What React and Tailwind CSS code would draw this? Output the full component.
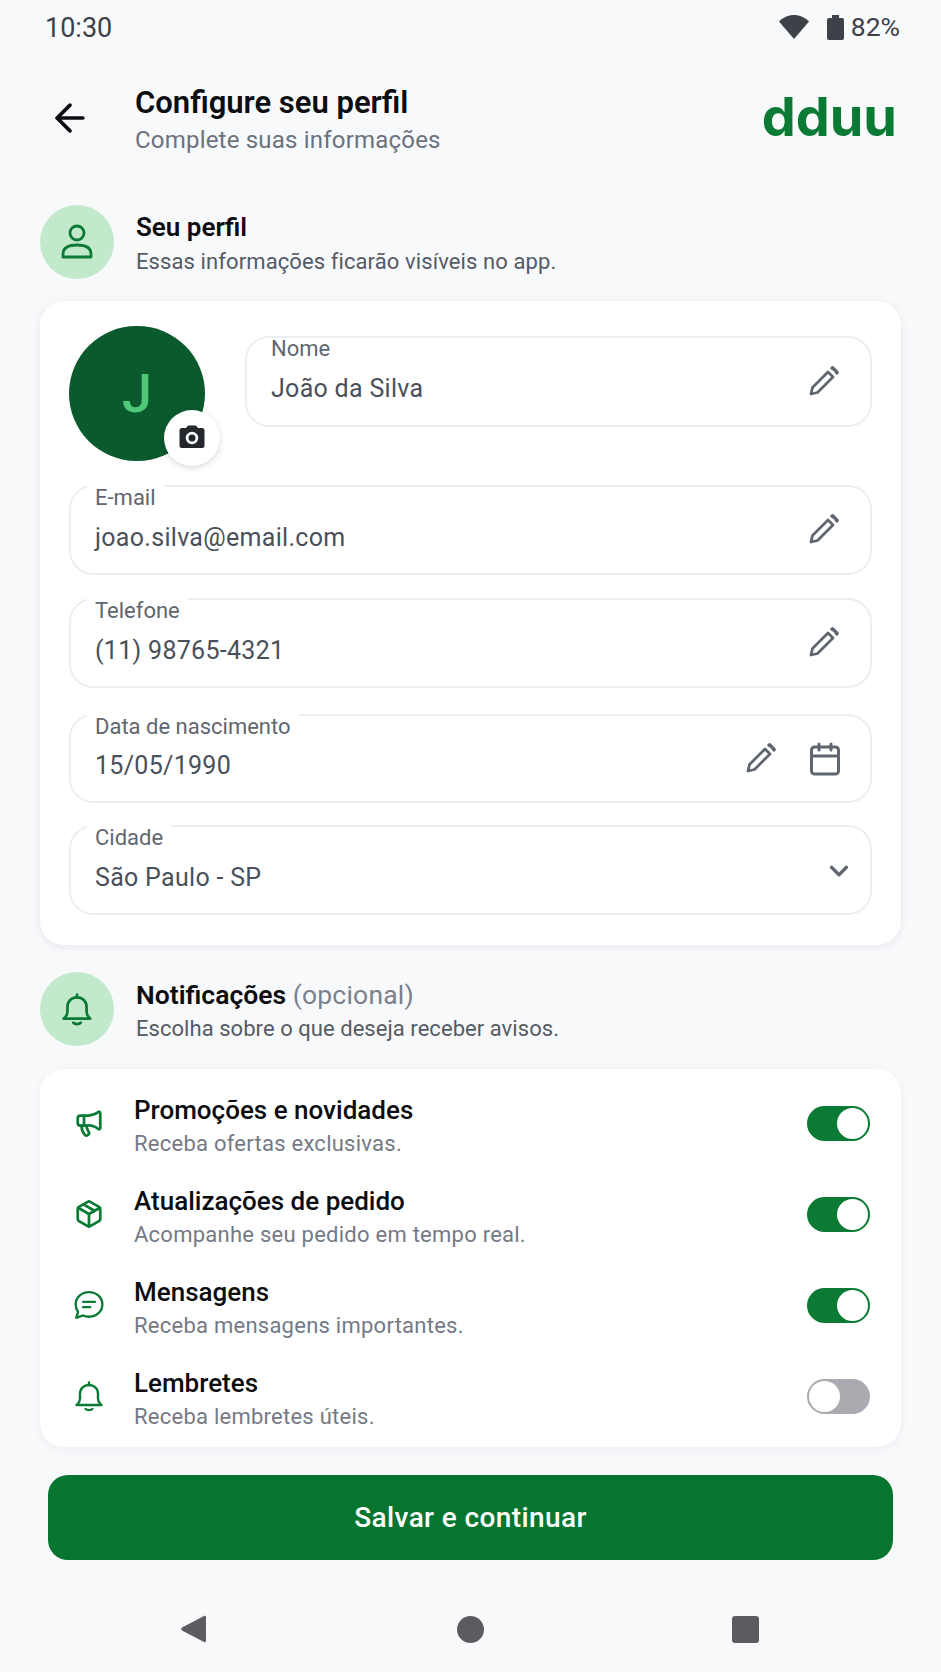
import { ArrowLeft, Calendar, ChevronDown, Megaphone, Package } from "lucide-react";

function PencilIcon({ className = "" }) {
  return (
    <svg className={className} width="32" height="32" viewBox="0 0 32 32" fill="none" stroke="#5f6670" strokeWidth="2.8" strokeLinejoin="round">
      <path d="M3 29 L4.5 22.5 L20 7 L25 12 L9.5 27.5 Z" />
      <path d="M23 4.2 L24.6 2.8 L29.2 7.4 L27.8 9" strokeWidth="3.4" />
    </svg>
  );
}

function BellIcon({ size, sw }) {
  return (
    <svg width={size} height={size} viewBox="0 0 32 32" fill="none" stroke="#0b7a35" strokeWidth={sw} strokeLinecap="round" strokeLinejoin="round">
      <path d="M16 2.5v2.5" />
      <path d="M3.5 25h25c-2-1.500-3.500-3.500-3.500-7v-4c0-5.500-4-9-9-9s-9 3.500-9 9v4c0 3.500-1.500 5.500-3.500 7Z" />
      <path d="M12.500 29c1.500 1.500 5.500 1.500 7 0" />
    </svg>
  );
}

function PersonIcon() {
  return (
    <svg width="34" height="36" viewBox="0 0 34 36" fill="none" stroke="#0b7a35" strokeWidth="2.800" strokeLinejoin="round">
      <circle cx="17" cy="9" r="7" />
      <path d="M3 33v-3c0-6 5-9 14-9s14 3 14 9v3Z" />
    </svg>
  );
}

function ChatIcon() {
  return (
    <svg width="32" height="32" viewBox="0 0 30 30" fill="none" stroke="#0b7a35" strokeWidth="2.200" strokeLinecap="round" strokeLinejoin="round">
      <path d="M15 3c7 0 12.500 5 12.500 11.500S22 26 15 26c-2 0-4-.4-5.500-1.200L3 27l1.800-5.500C3.300 19.500 2.500 17 2.500 14.500 2.500 8 8 3 15 3Z" />
      <path d="M9.500 12h11" />
      <path d="M9.500 17h6.500" />
    </svg>
  );
}

function Field({ label, value, notch = true, className = "", right }) {
  return (
    <div className={`relative flex items-center justify-between border-2 border-[#eceef3] rounded-[24px] pl-[24px] pr-[27px] ${className}`}>
      <span className={`absolute left-[16px] top-[-2px] px-[8px] text-[22px] leading-[26px] text-[#5f6670] ${notch ? "bg-white" : ""}`}>
        {label}
      </span>
      <span className="mt-[15px] text-[25px] tracking-[0.3px] text-[#4a505a]">{value}</span>
      <div className="flex items-center gap-[30px] mt-[-2px]">{right}</div>
    </div>
  );
}

function Toggle({ on }) {
  return (
    <div className={`flex w-[63px] h-[35px] rounded-full p-[2px] ${on ? "bg-[#0b7a35] justify-end" : "bg-[#a9abb1] justify-start"}`}>
      <div className="w-[31px] h-[31px] rounded-full bg-white" />
    </div>
  );
}

function NotifRow({ icon, title, desc, on }) {
  return (
    <div className="flex items-center h-[91px] pl-[33px] pr-[31px]">
      <div className="flex justify-center w-[32px] mb-[7px]">{icon}</div>
      <div className="ml-[29px] flex-1">
        <div className="text-[26px] leading-[34px] font-medium text-[#0c0d10]">{title}</div>
        <div className="mt-[1px] text-[22px] leading-[32px] tracking-[0.25px] text-[#747a85]">{desc}</div>
      </div>
      <div className="mb-[6px]">
        <Toggle on={on} />
      </div>
    </div>
  );
}

export default function App() {
  return (
    <div className="w-[941px] h-[1672px] overflow-hidden bg-[#f8f9fb] font-['Roboto',sans-serif]">
      {/* STATUS BAR */}
      <div className="flex items-center justify-between h-[54px] pl-[45px] pr-[41px]">
        <span className="mt-[2px] text-[27px] text-[#3d4249]">10:30</span>
        <div className="flex items-center">
          <svg width="30" height="24" viewBox="0 0 30 24" fill="#3d4249">
            <path d="M15 24 0 6.500C4 2.500 9.200 0 15 0s11 2.500 15 6.500Z" />
          </svg>
          <svg className="ml-[18px]" width="17" height="25" viewBox="0 0 17 25" fill="#3d4249">
            <path d="M5 0h7v3h3a2 2 0 0 1 2 2v18a2 2 0 0 1-2 2H2a2 2 0 0 1-2-2V5a2 2 0 0 1 2-2h3Z" />
          </svg>
          <span className="ml-[7px] text-[26.5px] text-[#3d4249]">82%</span>
        </div>
      </div>

      {/* HEADER */}
      <div className="flex items-center mt-[29px] h-[76px] pl-[48px] pr-[44px]">
        <ArrowLeft size={44} strokeWidth={2} className="mb-[6px] text-[#0c0d10]" />
        <div className="ml-[43px] flex-1">
          <div className="mt-[1px] text-[31px] leading-[37px] font-semibold text-[#0c0d10]">Configure seu perfil</div>
          <div className="text-[24px] leading-[38px] tracking-[0.2px] text-[#6b7280]">Complete suas informações</div>
        </div>
        <span className="mb-[9px] text-[54px] leading-[60px] font-['Inter',sans-serif] font-bold tracking-[0px] text-[#0b7a35]">dduu</span>
      </div>

      {/* SEU PERFIL */}
      <div className="flex items-center mt-[46px] pl-[40px]">
        <div className="flex items-center justify-center w-[74px] h-[74px] rounded-full bg-[#c2e9cc]">
          <PersonIcon />
        </div>
        <div className="ml-[22px] pt-[5px]">
          <div className="text-[26px] leading-[35px] font-semibold text-[#0c0d10]">Seu perfil</div>
          <div className="text-[22px] leading-[34px] tracking-[0.1px] text-[#555b65]">Essas informações ficarão visíveis no app.</div>
        </div>
      </div>

      <div className="mt-[22px] mx-[40px] px-[29px] pt-[25px] pb-[30px] bg-white rounded-[24px] shadow-[0_2px_8px_rgba(20,30,60,0.08)]">
        <div className="flex items-start">
          <div className="relative shrink-0 w-[136px] h-[135px] rounded-full bg-[#0b5a2e] flex items-center justify-center">
            <span className="text-[54px] font-medium text-[#4fc878]">J</span>
            {/* CAMERA */}
            <div className="absolute left-[95px] top-[84px] flex items-center justify-center w-[56px] h-[56px] rounded-full bg-white shadow-[0_2px_6px_rgba(0,0,0,0.15)]">
              <svg width="30" height="30" viewBox="0 0 24 24" fill="#24272c">
                <path d="M9 2 7.170 4H4a2 2 0 0 0-2 2v12a2 2 0 0 0 2 2h16a2 2 0 0 0 2-2V6a2 2 0 0 0-2-2h-3.170L15 2Zm3 15a5 5 0 1 1 0-10 5 5 0 0 1 0 10Zm0-2.200a2.800 2.800 0 1 0 0-5.600 2.800 2.800 0 0 0 0 5.600Z" fillRule="evenodd" />
              </svg>
            </div>
          </div>
          <Field label="Nome" value="João da Silva" notch={false} className="flex-1 ml-[40px] mt-[10px] h-[91px]" right={<PencilIcon className="mr-[3px]" />} />
        </div>

        <Field label="E-mail" value="joao.silva@email.com" className="mt-[24px] h-[90px]" right={<PencilIcon className="mr-[3px]" />} />
        <Field label="Telefone" value="(11) 98765-4321" className="mt-[23px] h-[90px]" right={<PencilIcon className="mr-[3px]" />} />
        <Field
          label="Data de nascimento"
          value="15/05/1990"
          className="mt-[26px] h-[89px]"
          right={
            <>
              <PencilIcon />
              <Calendar size={36} strokeWidth={2} className="mt-[3px] text-[#5f6670]" />
            </>
          }
        />
        <Field label="Cidade" value="São Paulo - SP" className="mt-[22px] h-[90px]" right={<ChevronDown size={30} strokeWidth={2.6} className="mr-[-11px] mt-[4px] text-[#5f6670]" />} />
      </div>

      {/* NOTIFICACOES */}
      <div className="flex items-center mt-[27px] pl-[40px]">
        <div className="flex items-center justify-center w-[74px] h-[74px] rounded-full bg-[#c2e9cc]">
          <BellIcon size={34} sw={2.600} />
        </div>
        <div className="ml-[22px] pt-[5px]">
          <div className="text-[26.5px] leading-[35px] font-semibold text-[#0c0d10]">
            Notificações <span className="font-normal tracking-[0.2px] text-[#7b818c]">(opcional)</span>
          </div>
          <div className="text-[22px] leading-[34px] tracking-[0.05px] text-[#555b65]">Escolha sobre o que deseja receber avisos.</div>
        </div>
      </div>

      <div className="mt-[23px] mx-[40px] pt-[12px] pb-[2px] bg-white rounded-[24px] shadow-[0_2px_8px_rgba(20,30,60,0.06)]">
        <NotifRow icon={<Megaphone size={30} strokeWidth={2.200} className="text-[#0b7a35]" />} title="Promoções e novidades" desc="Receba ofertas exclusivas." on />
        <NotifRow icon={<Package size={30} strokeWidth={2.200} className="text-[#0b7a35]" />} title="Atualizações de pedido" desc="Acompanhe seu pedido em tempo real." on />
        <NotifRow icon={<ChatIcon />} title="Mensagens" desc="Receba mensagens importantes." on />
        <NotifRow icon={<BellIcon size={32} sw={2.400} />} title="Lembretes" desc="Receba lembretes úteis." on={false} />
      </div>

      {/* BOTAO */}
      <div className="mt-[28px] mx-[48px] flex items-center justify-center h-[85px] rounded-[20px] bg-[#05752f]">
        <span className="text-[28px] tracking-[0.4px] font-medium text-white">Salvar e continuar</span>
      </div>

      {/* NAV */}
      <div className="flex items-center justify-between mt-[55px] pl-[180px] pr-[182px]">
        <svg width="28" height="28" viewBox="0 0 28 28" fill="#5a5c60">
          <path d="M2 12.500 24 1c1-.5 2 0 2 1.500v23c0 1.500-1 2-2 1.500L2 15.500c-1-.7-1-2.300 0-3Z" />
        </svg>
        <div className="w-[27px] h-[27px] rounded-full bg-[#5a5c60]" />
        <div className="w-[27px] h-[27px] rounded-[3px] bg-[#5a5c60]" />
      </div>
    </div>
  );
}
